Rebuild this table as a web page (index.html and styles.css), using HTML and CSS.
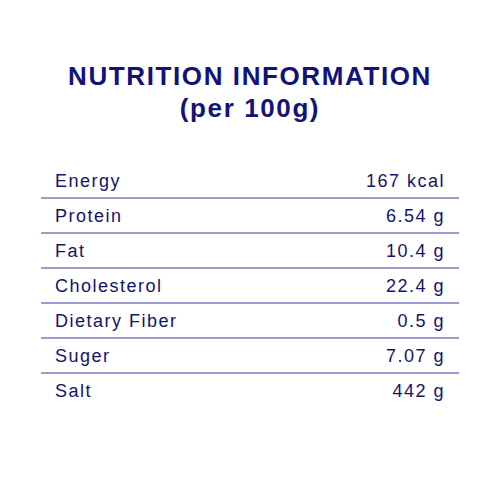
FILE: index.html
```html
<!DOCTYPE html>
<html>
<head>
<meta charset="utf-8">
<link rel="stylesheet" href="styles.css">
</head>
<body>
<div class="panel">
  <h1 class="title">NUTRITION INFORMATION<br>(per 100g)</h1>
  <div class="table">
    <div class="row"><span>Energy</span><span>167 kcal</span></div>
    <div class="row"><span>Protein</span><span>6.54 g</span></div>
    <div class="row"><span>Fat</span><span>10.4 g</span></div>
    <div class="row"><span>Cholesterol</span><span>22.4 g</span></div>
    <div class="row"><span>Dietary Fiber</span><span>0.5 g</span></div>
    <div class="row"><span>Suger</span><span>7.07 g</span></div>
    <div class="row last"><span>Salt</span><span>442 g</span></div>
  </div>
</div>
</body>
</html>
```
FILE: styles.css
```css
html, body {
  margin: 0;
  padding: 0;
  background: #ffffff;
}
.panel {
  width: 500px;
  height: 500px;
  padding-top: 60px;
  box-sizing: border-box;
  font-family: "Liberation Sans", Arial, sans-serif;
}
.title {
  margin: 0;
  text-align: center;
  font-size: 26px;
  line-height: 32px;
  font-weight: bold;
  letter-spacing: 1.6px;
  color: #12127a;
}
.table {
  margin: 40px 0 0 41px;
  width: 418px;
}
.row {
  display: flex;
  justify-content: space-between;
  height: 31px;
  line-height: 31px;
  padding: 2px 14px 0 14px;
  border-bottom: 2px solid #9b9bd2;
  font-size: 18px;
  letter-spacing: 1.5px;
  color: #141468;
}
.row.last {
  border-bottom: none;
}
```
